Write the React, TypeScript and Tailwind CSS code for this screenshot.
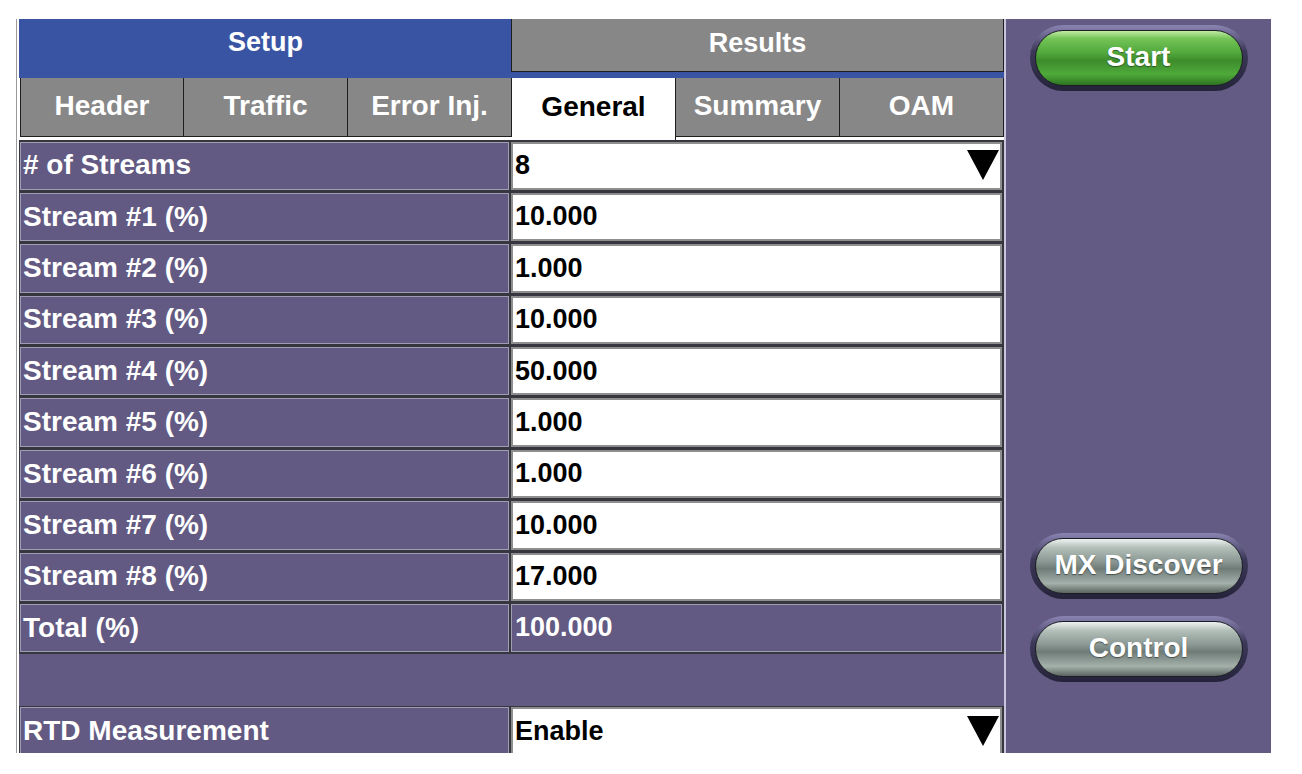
const streams = ["10.000", "1.000", "10.000", "50.000", "1.000", "1.000", "10.000", "17.000"];

const subTabs = ["Header", "Traffic", "Error Inj.", "General", "Summary", "OAM"];

function Triangle() {
  return (
    <svg width="32" height="30" viewBox="0 0 32 30" className="shrink-0">
      <polygon points="0,0 32,0 16,30" fill="#000" />
    </svg>
  );
}

function Row({ label, children, total }: { label: string; children: React.ReactNode; total?: boolean }) {
  return (
    <div className="flex h-[51.4px] shrink-0 gap-[2px] bg-[#36363e] py-[1.5px] pl-[1px] pr-[2px]">
      <div className="flex w-[489px] items-center border border-[#a09cb4] bg-[#625a82] pb-[1px] pl-[2px] text-[28px] font-bold text-white">
        {label}
      </div>
      <div
        className={
          total
            ? "flex flex-1 items-center border border-[#a09cb4] bg-[#625a82] pb-[1px] pl-[3px] text-[27px] font-bold text-white"
            : "flex flex-1 items-center border-2 border-[#8e8e8e] bg-white pb-[1px] pl-[2px] text-[27px] font-bold text-black"
        }
      >
        {children}
      </div>
    </div>
  );
}

function Pill({ label, green }: { label: string; green?: boolean }) {
  return (
    <div className="h-[66px] w-[218px] rounded-full bg-[linear-gradient(to_bottom,#8a84b2_0%,#3c3858_40%,#25233a_100%)] p-[5px]">
      <div
        className={`flex h-full items-center justify-center rounded-full border border-[#1c1c24] pb-[2px] text-[28px] font-bold text-white [text-shadow:0_1px_1px_rgba(0,0,0,0.45)] ${
          green
            ? "bg-[linear-gradient(to_bottom,#c2eca6_0%,#74c457_14%,#52a93c_40%,#3d8c2c_55%,#4faa3a_80%,#2e7321_100%)]"
            : "bg-[linear-gradient(to_bottom,#eef3f1_0%,#b3bfb9_16%,#8a9792_42%,#6f7b77_55%,#a4b0aa_82%,#5a6561_100%)]"
        }`}
      >
        {label}
      </div>
    </div>
  );
}

export default function App() {
  return (
    <div className="min-h-screen bg-white pl-[16px] pt-[19px] font-['Liberation_Sans',Arial,sans-serif]">
      <div className="flex h-[734px] w-[1255px] overflow-hidden">
        {/* left panel */}
        <div className="flex w-[988px] shrink-0 flex-col border-l border-[#9a9a9a] bg-white pl-[2px]">
          <div className="flex h-[59px] shrink-0 items-start bg-[#3a54a4] pl-[1px]">
            <div className="flex h-[53px] w-[491px] items-center justify-center pb-[6px] text-[27px] font-bold text-white">
              Setup
            </div>
            <div className="flex h-[53px] w-[493px] items-center justify-center border-x border-b border-[#1e1e1e] bg-[#878787] pb-[4px] text-[27px] font-bold text-white">
              Results
            </div>
          </div>
          <div className="flex h-[62px] shrink-0 items-start bg-white pl-[1px]">
            {subTabs.map((t, i) => (
              <div
                key={t}
                className={
                  t === "General"
                    ? "flex h-[62px] w-[164px] items-center justify-center border-r border-[#1e1e1e] bg-white pb-[5px] text-[28px] font-bold text-black"
                    : `flex h-[59px] w-[164px] items-center justify-center border-b border-r border-[#1e1e1e] bg-[#878787] pb-[2px] text-[28px] font-bold text-white ${
                        i === 0 ? "border-l" : ""
                      }`
                }
              >
                {t}
              </div>
            ))}
          </div>
          <div className="flex flex-1 flex-col bg-[#625a82]">
            <Row label="# of Streams">
              <div className="flex w-full items-center justify-between pr-[1px]">
                <span>8</span>
                <Triangle />
              </div>
            </Row>
            {streams.map((v, i) => (
              <Row key={i} label={`Stream #${i + 1} (%)`}>
                {v}
              </Row>
            ))}
            <Row label="Total (%)" total>
              100.000
            </Row>
            <div className="h-[52px] shrink-0" />
            <Row label="RTD Measurement">
              <div className="flex w-full items-center justify-between pr-[1px]">
                <span>Enable</span>
                <Triangle />
              </div>
            </Row>
          </div>
        </div>

        {/* right panel */}
        <div className="flex flex-1 flex-col items-center border-l-2 border-[#c9c5dd] bg-[#635b84] pb-[71px] pt-[6px]">
          <Pill label="Start" green />
          <div className="flex-1" />
          <Pill label="MX Discover" />
          <div className="h-[17px]" />
          <Pill label="Control" />
        </div>
      </div>
    </div>
  );
}
